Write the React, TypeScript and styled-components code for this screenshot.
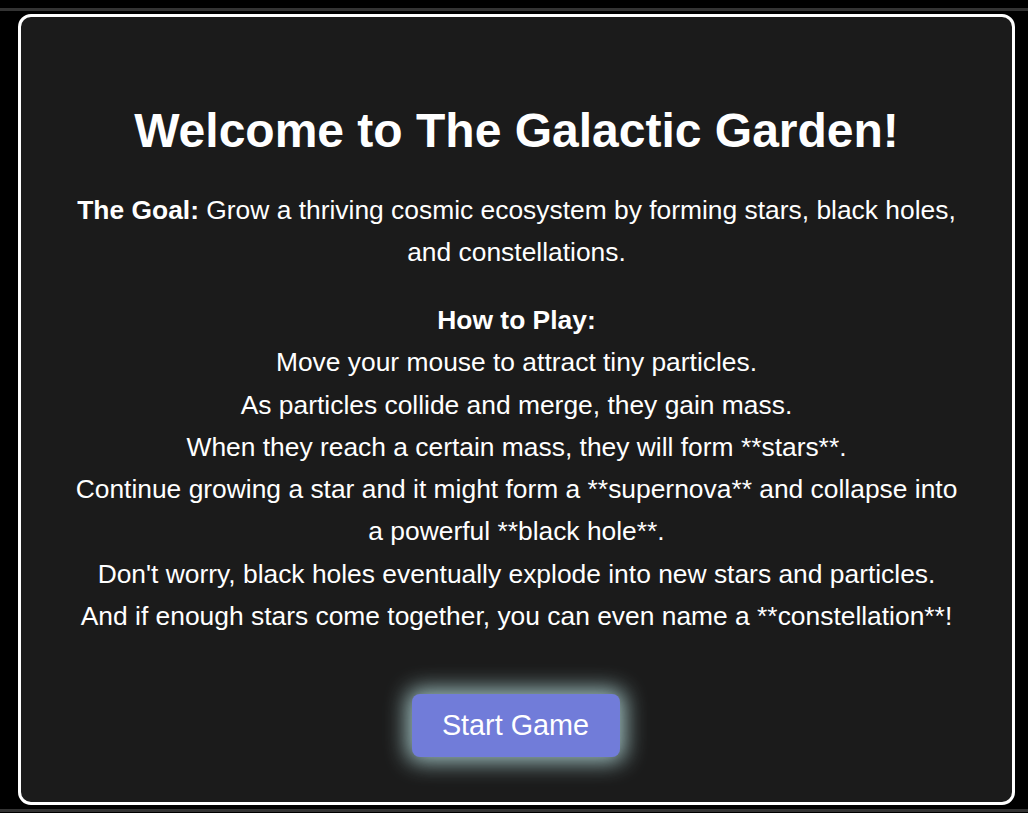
import React from "react";
import styled, { createGlobalStyle } from "styled-components";

const Global = createGlobalStyle`
  html, body { margin: 0; padding: 0; background: #000; }
  body { font-family: "Liberation Sans", Arial, sans-serif; color: #fff; }
  * { box-sizing: border-box; }
`;

const Screen = styled.div`
  width: 1028px;
  height: 813px;
  padding-top: 8px;
  background: #000;
  overflow: hidden;
`;

const Stage = styled.div`
  height: 804px;
  border-top: 3px solid #333;
  border-bottom: 3px solid #333;
  padding: 3px 13px 4px 18px;
  display: flex;
`;

const Panel = styled.section`
  flex: 1;
  background: #1b1b1b;
  border: 3px solid #fff;
  border-radius: 13px;
  padding: 86px 50px 0;
  display: flex;
  flex-direction: column;
  align-items: center;
  text-align: center;
`;

const Title = styled.h1`
  margin: 0 0 30px;
  font-size: 48px;
  line-height: 56px;
  font-weight: 700;
`;

const Paragraph = styled.p`
  margin: 0 0 26px;
  font-size: 26.4px;
  line-height: 42px;
`;

const Steps = styled.div`
  font-size: 26.4px;
  line-height: 42.3px;
`;

const Button = styled.button`
  margin-top: 57px;
  margin-right: 2px;
  width: 208px;
  height: 63px;
  border: none;
  border-radius: 8px;
  background: #717cd9;
  color: #fff;
  font-family: "Liberation Sans", Arial, sans-serif;
  font-size: 28.8px;
  box-shadow: 0 0 22px 5px rgba(195, 238, 238, 0.8);
  cursor: pointer;
`;

export default function App() {
  return (
    <>
      <Global />
      <Screen>
        <Stage>
          <Panel>
            <Title>Welcome to The Galactic Garden!</Title>
            <Paragraph>
              <strong>The Goal:</strong> Grow a thriving cosmic ecosystem by forming stars, black holes,
              and constellations.
            </Paragraph>
            <Steps>
              <strong>How to Play:</strong>
              <br />
              Move your mouse to attract tiny particles.
              <br />
              As particles collide and merge, they gain mass.
              <br />
              When they reach a certain mass, they will form **stars**.
              <br />
              Continue growing a star and it might form a **supernova** and collapse into a powerful **black hole**.
              <br />
              Don't worry, black holes eventually explode into new stars and particles.
              <br />
              And if enough stars come together, you can even name a **constellation**!
            </Steps>
            <Button>Start Game</Button>
          </Panel>
        </Stage>
      </Screen>
    </>
  );
}
